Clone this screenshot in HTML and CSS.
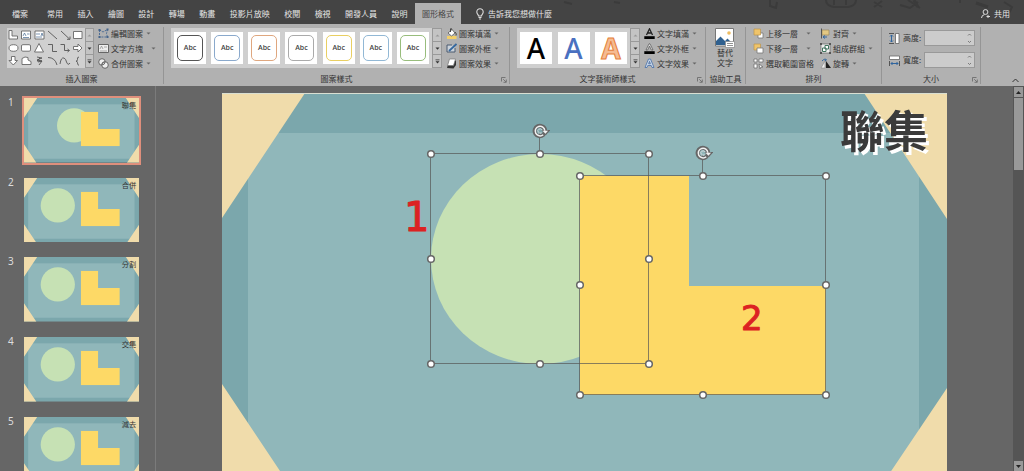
FILE: index.html
```html
<!DOCTYPE html>
<html lang="zh-Hant">
<head>
<meta charset="utf-8">
<title>圖形格式</title>
<link rel="stylesheet" href="styles.css">
</head>
<body>
<svg class="defs" aria-hidden="true">
  <symbol id="backdrop" viewBox="0 0 725 408">
    <rect width="725" height="408" fill="#7ba7ac"/>
    <rect x="26" y="40" width="671" height="343" fill="#90b7ba"/>
    <path d="M0 0H83L0 125ZM642 0H725V126ZM0 291L78 408H0ZM725 295V408H649Z" fill="#f0dcab"/>
  </symbol>
  <symbol id="ell" viewBox="0 0 246 219"><path d="M0 0H109V110H246V219H0Z" fill="#fdd966"/></symbol>
  <symbol id="thumb" viewBox="0 0 725 408">
    <use href="#backdrop"/><circle cx="213" cy="173" r="108" fill="#c6e1b4"/><use href="#ell" x="358" y="86" width="246" height="219"/>
  </symbol>
  <symbol id="caret" viewBox="0 0 5 5"><path d="M0.5 1.5H4.5L2.5 3.5Z" fill="#666"/></symbol>
  <symbol id="up" viewBox="0 0 5 5"><path d="M0.5 3.5H4.5L2.5 1.5Z" fill="#999"/></symbol>
  <symbol id="down" viewBox="0 0 5 5"><path d="M0.5 1.5H4.5L2.5 3.7Z" fill="#333"/></symbol>
  <symbol id="more" viewBox="0 0 5 5"><path d="M0.5 2.3H4.5L2.5 4.5ZM0.5 0.4H4.5V1.2H0.5Z" fill="#333"/></symbol>
  <symbol id="launch" viewBox="0 0 6 6"><path d="M0.5 4.5V0.5H4.5M2.2 2.2L5 5M5.3 2.5V5.3H2.5" fill="none" stroke="#666" stroke-width=".8"/></symbol>
  <symbol id="rotate" viewBox="-8 -8 18 16">
    <path d="M5 0A5.2 5.2 0 1 1 2.2-4.6A5.2 5.2 0 0 1 5.2 0" fill="none" stroke="#666" stroke-width="4"/>
    <path d="M1.500-1H10.500L6 4Z" fill="#666"/>
    <path d="M3.200 3.700A4.800 4.800 0 1 1 4.800-.2" fill="none" stroke="#f2f2f2" stroke-width="1.500"/>
    <path d="M2.500-.2H8L5.400 2.800Z" fill="#f2f2f2"/>
    <path d="M1.500 1.500A2.100 2.100 0 1 1 2-.8" fill="none" stroke="#ddd" stroke-width=".8"/>
  </symbol>
</svg>

<header class="topbar">
  <svg class="doodles" viewBox="0 0 464 24" aria-hidden="true">
    <g fill="none" stroke="#3b3b3b" stroke-width="2">
      <path d="M4 2l8 2M54 2l6 1M210 0v6l6 2 1-6M266 0q0 6 8 7h14q8-1 8-7M274 0v5M286 0v5M314 2l8 5M322 1l-8 6M340 5l10 3 8-6M348 0l12 8M400 0v3M444 2l8 5-3 6"/>
      <path d="M354 0l4 7M416 3l12 4" stroke-width="3"/>
    </g>
  </svg>
  <button class="tab file">檔案</button>
  <nav class="tabs">
    <button class="tab">常用</button><button class="tab">插入</button><button class="tab">繪圖</button><button class="tab">設計</button><button class="tab">轉場</button><button class="tab">動畫</button><button class="tab">投影片放映</button><button class="tab">校閱</button><button class="tab">檢視</button><button class="tab">開發人員</button><button class="tab">說明</button><button class="tab active">圖形格式</button>
  </nav>
  <button class="tell"><svg width="8" height="12" viewBox="0 0 8 12"><path d="M2.5 8C2.5 6.5.8 6 .8 4A3.2 3.2 0 0 1 7.2 4C7.2 6 5.5 6.500 5.500 8ZM2.500 9.500H5.500M3 11H5" fill="none" stroke="#ddd" stroke-width="1.100"/></svg>告訴我您想做什麼</button>
  <button class="share"><svg width="9" height="9" viewBox="0 0 9 9"><g fill="none" stroke="#ddd"><circle cx="4.500" cy="3" r="2.400"/><path d="M.5 9Q.7 6 3.500 5.600M5.500 7.500H9M7 5.800V9"/></g></svg>共用</button>
</header>

<section class="ribbon">
  <div class="group">
    <div class="content">
      <div class="gallery shapes">
        <svg width="78" height="40" viewBox="0 0 78 40" role="img" aria-label="圖案">
          <g fill="#fff" stroke="#666" stroke-width=".9">
            <path d="M2 2.500H5V8H10.500V11H2Z"/>
            <path d="M14.500 3H23.500V11H14.500ZM28 3H37V11H28ZM66.500 3.500H75V10.500H66.500Z"/>
            <ellipse cx="6.500" cy="20" rx="4.500" ry="3.300"/><rect x="14.500" y="16.700" width="9" height="6.500" rx="1.300"/><path d="M32 15.500L36.500 24H27.500Z"/>
            <path d="M66.500 18.500H71V16L75 20L71 24V21.500H66.500Z"/>
            <path d="M4.500 28.500H8V32.500H10.500L6.300 37L2 32.500H4.500Z"/><path d="M15 30.500L18 29L21 29.500V32L24 33.500V36.500H15Z"/>
          </g>
          <g fill="none" stroke="#555" stroke-width=".9">
            <path d="M41 3L50 11M54 3L62.500 11M63 8.500V11.300H60M41 16.500H45.500V23.500H50M53.500 16.500H57.500V22.500H62M60.500 21L62.500 22.500L60.500 24"/>
            <path d="M30 29l5 1-5 2 5 1-4 1M33 30l-3 3 5 0-3 4M41 29.500Q48 29.500 50 37M53 36Q54 29 57 30Q59 31 59.500 34Q61 38 63 35M72 29q-2 0-1.500 2.500q0 1.700-1.500 1.700q1.500 0 1.500 1.500q0 2.600 1.500 2.600"/>
            <path d="M16 8l1.500-3L19 8M20 6h2.500M16 9.500h6M29 6h4M34 8l1-3 1 3M29 9h6" stroke="#45688f" stroke-width=".7"/>
          </g>
        </svg>
        <div class="scroller"><button aria-label="上一列"><svg><use href="#up"/></svg></button><button aria-label="下一列"><svg><use href="#down"/></svg></button><button aria-label="其他"><svg><use href="#more"/></svg></button></div>
      </div>
      <div class="commands">
        <button class="cmd"><svg class="ico" viewBox="0 0 11 11"><path d="M1.500 2L5 4L9.500 1.500L8.500 5.500L9.500 9H1.500Z" fill="none" stroke="#4c6c95" stroke-dasharray="2 1"/><path d="M.5 1h2v2h-2zM8.500.500h2v2h-2zM.5 8h2v2h-2zM8.500 8h2v2h-2z" fill="#46658b"/></svg><span>編輯圖案</span><svg class="caret"><use href="#caret"/></svg></button>
        <button class="cmd"><svg class="ico" viewBox="0 0 11 11"><path d="M.5 1.500H10.500V9.500H.5Z" fill="#eee" stroke="#666"/><path d="M2 6l1.500-3L5 6M6 4h3M2 8h7" fill="none" stroke="#888" stroke-width=".7"/></svg><span class="wide">文字方塊</span><svg class="caret"><use href="#caret"/></svg></button>
        <button class="cmd"><svg class="ico" viewBox="0 0 11 11"><g fill="#eee" stroke="#666"><circle cx="4" cy="4" r="3.300"/><circle cx="7" cy="7" r="3.300"/><path d="M7.200 3.700Q6.800 7 3.700 7Q4 4 7.200 3.700Z"/></g></svg><span>合併圖案</span><svg class="caret"><use href="#caret"/></svg></button>
      </div>
    </div>
    <div class="label">插入圖案</div>
  </div>

  <div class="group">
    <div class="content">
      <div class="gallery styles">
        <div class="cards">
          <button class="card"><span class="swatch black">Abc</span></button><button class="card"><span class="swatch blue">Abc</span></button><button class="card"><span class="swatch orange">Abc</span></button><button class="card"><span class="swatch gray">Abc</span></button><button class="card"><span class="swatch yellow">Abc</span></button><button class="card"><span class="swatch sky">Abc</span></button><button class="card"><span class="swatch green">Abc</span></button>
        </div>
        <div class="scroller"><button aria-label="上一列"><svg><use href="#up"/></svg></button><button aria-label="下一列"><svg><use href="#down"/></svg></button><button aria-label="其他"><svg><use href="#more"/></svg></button></div>
      </div>
      <div class="commands">
        <button class="cmd"><svg class="ico" viewBox="0 0 11 11"><path d="M1 8H10.500V11H1Z" fill="#f3cf68"/><path d="M2 5L6 1.500L9 5L5.500 8Z" fill="#fff" stroke="#555" stroke-width=".8"/><path d="M4.500 4V.8q1-1 1.500 1M9 4q2 2 1 3.500" fill="none" stroke="#444" stroke-width="1"/></svg><span>圖案填滿</span><svg class="caret"><use href="#caret"/></svg></button>
        <button class="cmd"><svg class="ico" viewBox="0 0 11 11"><path d="M9 5V9H1V2H6" fill="#ccd3da" stroke="#4b5b70"/><path d="M3 8L10.500 1" stroke="#35689e" stroke-width="1.800"/></svg><span>圖案外框</span><svg class="caret"><use href="#caret"/></svg></button>
        <button class="cmd"><svg class="ico" viewBox="0 0 11 11"><path d="M3 3L10 2.500V7L7.500 10.500L1 10Z" fill="#333"/><path d="M3.500 1H9.500L7.500 7.500H1.500Z" fill="#fff" stroke="#777" stroke-width=".7"/></svg><span>圖案效果</span><svg class="caret"><use href="#caret"/></svg></button>
      </div>
    </div>
    <div class="label">圖案樣式<button class="launcher" aria-label="圖案樣式選項"><svg><use href="#launch"/></svg></button></div>
  </div>

  <div class="group">
    <div class="content">
      <div class="gallery wordart">
        <div class="cards">
          <button class="card art art-black">A</button><button class="card art art-blue">A</button><button class="card art art-orange">A</button>
        </div>
        <div class="scroller"><button aria-label="上一列"><svg><use href="#up"/></svg></button><button aria-label="下一列"><svg><use href="#down"/></svg></button><button aria-label="其他"><svg><use href="#more"/></svg></button></div>
      </div>
      <div class="commands">
        <button class="cmd"><svg class="ico" viewBox="0 0 11 11"><path d="M2.500 7L5.500.8L8.500 7M3.500 5H7.500" fill="none" stroke="#222" stroke-width="1.300"/><path d="M.3 8.200H10.700V11H.3Z" fill="#000"/></svg><span>文字填滿</span><svg class="caret"><use href="#caret"/></svg></button>
        <button class="cmd"><svg class="ico" viewBox="0 0 11 11"><path d="M2 7L5 .8H6L9 7H7.300L5.500 3L3.700 7Z" fill="#ddd" stroke="#555" stroke-width=".7"/><path d="M.3 8.200H10.700V11H.3Z" fill="#000"/></svg><span>文字外框</span><svg class="caret"><use href="#caret"/></svg></button>
        <button class="cmd"><svg class="ico" viewBox="0 0 11 11"><path d="M1 9.500L4.500 1H6.500L10 9.500H8L7.200 7.500H3.800L3 9.500ZM4.600 5.800H6.400L5.500 3.300Z" fill="#cad7e8" stroke="#4870a8" stroke-width=".8"/></svg><span>文字效果</span><svg class="caret"><use href="#caret"/></svg></button>
      </div>
    </div>
    <div class="label">文字藝術師樣式<button class="launcher" aria-label="文字藝術師樣式選項"><svg><use href="#launch"/></svg></button></div>
  </div>

  <div class="group">
    <div class="content">
      <button class="alt"><svg width="20" height="20" viewBox="0 0 20 20"><path d="M.5.5H18.500V18H.5Z" fill="#fff" stroke="#777"/><circle cx="14" cy="5" r="1.800" fill="#eebd62"/><path d="M1 17V13L5.500 8.500L10 13L12.500 10.500L16 14V17Z" fill="#2f608f"/><path d="M10.500 13.500H19.500V19.500H10.500Z" fill="#fff" stroke="#888" stroke-width=".7"/><path d="M12 15.500H18M12 17.500H18" stroke="#777" stroke-width=".8"/></svg><span>替代<br>文字</span></button>
    </div>
    <div class="label">協助工具</div>
  </div>

  <div class="group">
    <div class="content">
      <div class="commands">
        <button class="cmd"><svg class="ico" viewBox="0 0 11 11"><path d="M5 5H10V10H5Z" fill="#fff" stroke="#777" stroke-width=".8"/><path d="M1 1H7.500V7H1Z" fill="#efc46b" stroke="#bd954c" stroke-width=".7"/></svg><span class="wide">上移一層</span><svg class="caret"><use href="#caret"/></svg></button>
        <button class="cmd"><svg class="ico" viewBox="0 0 11 11"><path d="M1 1H7.500V7H1Z" fill="#efc46b" stroke="#bd954c" stroke-width=".7"/><path d="M4 5H10V10H4Z" fill="#fff" stroke="#777" stroke-width=".8"/></svg><span class="wide">下移一層</span><svg class="caret"><use href="#caret"/></svg></button>
        <button class="cmd"><svg class="ico" viewBox="0 0 11 11"><g fill="#fff" stroke="#666" stroke-width=".7"><path d="M1 1H4V4H1ZM6 1H10V4H6ZM1 6H4V10H1Z"/><path d="M6 6L10 9L8 9L7 11Z"/></g></svg><span>選取範圍窗格</span></button>
      </div>
      <div class="commands second">
        <button class="cmd"><svg class="ico" viewBox="0 0 11 11"><path d="M2 2H9V7H2Z" fill="#e3c883" stroke="#9b865a" stroke-width=".7"/><path d="M1.500.5V10.500" stroke="#555"/><path d="M3 9H7M5 7.500L3 9L5 10.500" fill="none" stroke="#35689e"/></svg><span>對齊</span><svg class="caret"><use href="#caret"/></svg></button>
        <button class="cmd"><svg class="ico" viewBox="0 0 11 11"><path d="M1 1H10V10H1Z" fill="#eee" stroke="#666" stroke-width=".7"/><path d="M2.500 5H6V8.500H2.500ZM5 2.500H8.500V6H5Z" fill="#fff" stroke="#41735e"/><path d="M0 0h2v2H0zM9 0h2v2H9zM0 9h2v2H0zM9 9h2v2H9z" fill="#555"/></svg><span>組成群組</span><svg class="caret"><use href="#caret"/></svg></button>
        <button class="cmd"><svg class="ico" viewBox="0 0 11 11"><path d="M6 3V10H11Z" fill="#222"/><path d="M5 3V10H1Z" fill="#eee" stroke="#888" stroke-width=".6"/><path d="M2 3Q3 .8 6 2M5 .5L6.500 2L5 3" fill="none" stroke="#35689e"/></svg><span>旋轉</span><svg class="caret"><use href="#caret"/></svg></button>
      </div>
    </div>
    <div class="label">排列</div>
  </div>

  <div class="group">
    <div class="content sizes">
      <div class="size"><svg class="ico" viewBox="0 0 11 11"><path d="M6.500.5H10V10.500H6.500Z" fill="#fff" stroke="#666" stroke-width=".8"/><path d="M0 .5H5M0 10.500H5" stroke="#555"/><path d="M2.500 2V9M1 3.500L2.500 2L4 3.500M1 7.500L2.500 9L4 7.500" fill="none" stroke="#2f659f"/></svg><label for="h">高度:</label><div class="spin"><input id="h" type="text"><svg viewBox="0 0 5 12"><path d="M1 3.500L2.500 2L4 3.500M1 9L2.500 10.500L4 9" fill="none" stroke="#666" stroke-width=".8"/></svg></div></div>
      <div class="size"><svg class="ico" viewBox="0 0 11 11"><path d="M.5 1H10.500V4.500H.5Z" fill="#fff" stroke="#666" stroke-width=".8"/><path d="M.5 6V11M10.500 6V11" stroke="#555"/><path d="M2 8.500H9M3.500 7L2 8.500L3.500 10M7.500 7L9 8.500L7.500 10" fill="none" stroke="#2f659f"/></svg><label for="w">寬度:</label><div class="spin"><input id="w" type="text"><svg viewBox="0 0 5 12"><path d="M1 3.500L2.500 2L4 3.500M1 9L2.500 10.500L4 9" fill="none" stroke="#666" stroke-width=".8"/></svg></div></div>
    </div>
    <div class="label">大小<button class="launcher" aria-label="大小選項"><svg><use href="#launch"/></svg></button></div>
  </div>
  <div class="collapse"><button aria-label="摺疊功能區"><svg width="7" height="5" viewBox="0 0 7 5"><path d="M.5 4L3.500 1L6.500 4" fill="none" stroke="#333"/></svg></button></div>
</section>

<main class="workspace">
  <ol class="thumbs">
    <li class="selected"><span>1</span><svg viewBox="0 0 725 408"><use href="#backdrop"/><circle cx="316" cy="173" r="108" fill="#c6e1b4"/><use href="#ell" x="358" y="86" width="246" height="219"/><text x="616" y="60">聯集</text></svg></li>
    <li><span>2</span><svg viewBox="0 0 725 408"><use href="#thumb"/><text x="616" y="60">合併</text></svg></li>
    <li><span>3</span><svg viewBox="0 0 725 408"><use href="#thumb"/><text x="616" y="60">分割</text></svg></li>
    <li><span>4</span><svg viewBox="0 0 725 408"><use href="#thumb"/><text x="616" y="60">交集</text></svg></li>
    <li><span>5</span><svg viewBox="0 0 725 408"><use href="#thumb"/><text x="616" y="60">減去</text></svg></li>
  </ol>
  <div class="stage">
    <svg class="slide" viewBox="0 0 725 408">
      <use href="#backdrop"/>
      <path d="M0 .5H725" stroke="#d9dfd2"/>
      <text class="title" x="618" y="55">聯集</text>
      <ellipse cx="318" cy="166" rx="109" ry="105" fill="#c6e1b4"/>
      <use href="#ell" x="358" y="83" width="246" height="219"/>
      <g class="frame"><path d="M208.500 60.500H426.500V270.500H208.500ZM317.500 61V40M357.500 82.500H603.500V301.500H357.500ZM480.500 83V62"/></g>
      <g class="handles">
        <circle cx="209" cy="61" r="3.300"/><circle cx="318" cy="61" r="3.300"/><circle cx="427" cy="61" r="3.300"/><circle cx="209" cy="166" r="3.300"/><circle cx="427" cy="166" r="3.300"/><circle cx="209" cy="271" r="3.300"/><circle cx="318" cy="271" r="3.300"/><circle cx="427" cy="271" r="3.300"/>
        <circle cx="358" cy="83" r="3.300"/><circle cx="481" cy="83" r="3.300"/><circle cx="604" cy="83" r="3.300"/><circle cx="358" cy="192" r="3.300"/><circle cx="604" cy="192" r="3.300"/><circle cx="358" cy="302" r="3.300"/><circle cx="481" cy="302" r="3.300"/><circle cx="604" cy="302" r="3.300"/>
      </g>
      <use href="#rotate" x="310" y="30" width="18" height="16"/>
      <use href="#rotate" x="473" y="52" width="18" height="16"/>
      <text class="ink one" x="182" y="138">1</text>
      <text class="ink two" x="519" y="237">2</text>
    </svg>
  </div>
  <div class="scrollbar"><button aria-label="向上捲動"><svg viewBox="0 0 5 5"><path d="M0 4H5L2.500 1Z"/></svg></button><div class="grip"></div><button class="end" aria-label="向下捲動"><svg viewBox="0 0 5 5"><path d="M0 1H5L2.500 4Z"/></svg></button></div>
</main>
</body>
</html>
```
FILE: styles.css
```css
* { box-sizing: border-box; }
body {
  margin: 0;
  height: 100vh;
  display: flex;
  flex-direction: column;
  overflow: hidden;
  background: #666;
  color: #333;
  font: 8px/12px "Noto Sans CJK TC", sans-serif;
}
button {
  margin: 0;
  padding: 0;
  border: 0;
  background: none;
  color: inherit;
  font: inherit;
  white-space: nowrap;
}
svg { display: block; flex: none; }
.defs { position: absolute; width: 0; height: 0; }

/* Title bar and tabs */
.topbar {
  position: relative;
  flex: none;
  display: flex;
  height: 24px;
  padding-top: 3px;
  background: #444;
  color: #e6e6e6;
}
.doodles { position: absolute; right: 0; top: 0; width: 464px; height: 24px; }
.tab { padding: 0 7px; }
.file { margin: 0 5px; }
.tabs { display: flex; justify-content: space-between; width: 421px; }
.active { background: #b1b1b1; color: #444; }
.tell { display: flex; align-items: center; gap: 4px; margin-left: 15px; }
.share { position: relative; display: flex; align-items: center; gap: 4px; margin: 0 14px 0 auto; }

/* Ribbon */
.ribbon {
  flex: none;
  display: grid;
  grid-template-columns: 164px 346px 196px 40px 136px 99px 1fr;
  height: 62px;
  background: #b1b1b1;
}
.group {
  display: flex;
  flex-direction: column;
  margin: 3px 0 2px;
  padding-top: 1px;
  border-right: 1px solid #959595;
}
.content { display: flex; flex: 1; padding-left: 7px; gap: 4px; }
.label { position: relative; text-align: center; line-height: 10px; }
.launcher { position: absolute; right: 2px; bottom: 1px; }
.launcher svg { width: 6px; height: 6px; }
.gallery { display: flex; height: 40px; background: #cfcfcf; }
.shapes { width: 87px; background: #d0d0d0; }
.styles { width: 271px; }
.wordart { width: 123px; }
.cards {
  display: flex;
  flex: 1;
  justify-content: space-between;
  align-items: center;
  padding: 0 3px;
}
.card { width: 32px; height: 32px; padding: 3px; background: #fff; }
.swatch {
  display: block;
  height: 26px;
  border: 1px solid;
  border-radius: 5px;
  font: 600 7px/23px "Open Sans", sans-serif;
}
.black { border-color: #555; color: #444; }
.blue { border-color: #8aa9cc; color: #444; }
.orange { border-color: #dfa77f; color: #444; }
.gray { border-color: #aaa; color: #444; }
.yellow { border-color: #e9cf62; color: #444; }
.sky { border-color: #92b8d5; color: #444; }
.green { border-color: #98bd7c; color: #444; }
.art { padding: 0; font: bold 28px/32px "Noto Sans", sans-serif; }
.art-black { color: #000; font-weight: 500; }
.art-blue { color: #4a70c0; font-weight: 500; }
.art-orange { color: #f5bb91; -webkit-text-stroke: 1px #e57f3b; }
.scroller { display: flex; flex-direction: column; width: 10px; border: 1px solid #999; }
.scroller button {
  display: grid;
  flex: 1;
  place-items: center;
  background: #c4c4c4;
}
.scroller button + button { border-top: 1px solid #999; }
.scroller svg { width: 5px; height: 5px; }
.commands { display: flex; flex-direction: column; gap: 4px; }
.cmd { display: flex; align-items: center; gap: 2px; height: 11px; }
.ico { width: 11px; height: 11px; }
.caret { width: 5px; height: 5px; margin-left: 1px; }
.wide { padding-right: 5px; }
.second { margin-left: 2px; }
.alt { margin-left: 2px; display: flex; flex-direction: column; align-items: center; font-size: 8px; line-height: 10px; }
.sizes { flex-direction: column; gap: 6px; padding-top: 2px; }
.size { display: flex; align-items: center; gap: 3px; padding-right: 5px; }
.size label { width: 18px; white-space: nowrap; }
.spin { position: relative; flex: 1; }
.spin input {
  display: block;
  width: 100%;
  height: 16px;
  border: 1px solid #999;
  background: #ccc;
  font: inherit;
}
.spin svg { position: absolute; right: 3px; top: 2px; width: 5px; height: 12px; }
.collapse { display: flex; justify-content: flex-end; align-items: flex-end; padding: 3px 5px; }

/* Slide list and canvas */
.workspace {
  flex: 1;
  min-height: 0;
  display: grid;
  grid-template-columns: 156px 1fr 11px;
  overflow: hidden;
}
.thumbs {
  display: flex;
  flex-direction: column;
  gap: 15px;
  min-height: 0;
  margin: 0;
  padding: 12px 16px 0 8px;
  border-right: 1px solid #7b7b7b;
  list-style: none;
  overflow: hidden;
}
.thumbs li { display: flex; flex: none; }
.thumbs span { width: 16px; color: #ddd; font: 10px/8px "Noto Sans", sans-serif; }
.thumbs svg { flex: 1; height: auto; }
.thumbs text { font-size: 46px; fill: #333; }
.selected svg { outline: 2px solid #df8f7c; }
.stage { min-height: 0; padding: 7px 66px 0; overflow: hidden; }
.slide { width: 100%; height: auto; }
.title { font-size: 44px; font-weight: bold; fill: #3b3b3b; filter: drop-shadow(3px 3px 0 #fff); }
.frame { fill: none; stroke: #555; stroke-opacity: .7; }
.handles { fill: #fff; stroke: #666; stroke-width: 1.5px; }
.ink {
  fill: #dc2222;
  stroke: #dc2222;
  stroke-width: 1px;
  stroke-linejoin: round;
  font-family: "DejaVu Sans", sans-serif;
}
.one { font-size: 40px; }
.two { font-size: 34px; }
.scrollbar { display: flex; flex-direction: column; padding: 1px 1px 0; background: #555; }
.scrollbar button { display: grid; place-items: center; height: 10px; background: #999; }
.scrollbar button svg { width: 5px; height: 5px; fill: #222; }
.grip { height: 72px; margin-top: 1px; background: #999; }
.end { margin-top: auto; }
```
